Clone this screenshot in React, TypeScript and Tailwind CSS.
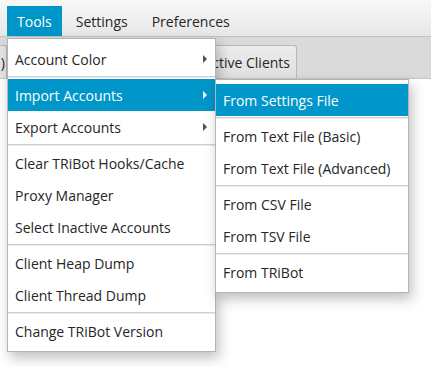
import React from "react";

const font = { fontFamily: '"Open Sans", "Noto Sans", sans-serif' };

function Arrow({ white }: { white?: boolean }) {
  return (
    <svg width="4" height="8" viewBox="0 0 4 8" className="shrink-0">
      <path d="M0 0 L4 4 L0 8 Z" fill={white ? "#ffffff" : "#4f4f4f"} />
    </svg>
  );
}

function Sep() {
  return (
    <div className="h-[4px] pt-[1px]">
      <div className="h-px bg-[#d0d0d0]" />
      <div className="h-px bg-[#ececec]" />
    </div>
  );
}

function Item({
  label,
  active,
  sub,
  pl,
}: {
  label: string;
  active?: boolean;
  sub?: boolean;
  pl: string;
}) {
  return (
    <div
      className={`h-[32px] flex items-center justify-between pr-[8px] ${pl} ${
        active ? "bg-[#0096c9] text-white" : "text-[#262626]"
      }`}
    >
      <span className="whitespace-nowrap">{label}</span>
      {sub && <Arrow white={active} />}
    </div>
  );
}

export default function App() {
  return (
    <div
      className="relative w-[431px] h-[367px] bg-white overflow-hidden text-[14px]"
      style={font}
    >
      {/* Menu bar */}
      <div className="h-[37px] flex items-stretch pt-[6px] pl-[7px] gap-[4px] bg-gradient-to-b from-[#f8f8f8] to-[#e7e7e7] border-b border-[#c2c2c2]">
        <div className="px-[10px] flex items-center bg-[#0096c9] text-white">Tools</div>
        <div className="px-[10px] flex items-center text-[#262626]">Settings</div>
        <div className="px-[10px] flex items-center text-[#262626]">Preferences</div>
      </div>

      {/* Tab header */}
      <div className="h-[42px] bg-[#dadada] border-b border-[#c6c6c6] flex items-end gap-[3px] pt-[8px]">
        <div className="h-[33px] w-[7px] bg-[#e6e6e6] border-t border-r border-[#b9b9b9] rounded-tr-[3px] flex items-center justify-end overflow-hidden text-[#262626]">
          <span className="whitespace-nowrap pr-[1px]">)</span>
        </div>
        <div className="h-[33px] w-[287px] bg-gradient-to-b from-[#ececec] to-[#e0e0e0] border border-b-0 border-[#b9b9b9] rounded-t-[3px] flex items-center justify-end pr-[6px] text-[#262626]">
          <span className="whitespace-nowrap">Inactive Clients</span>
        </div>
      </div>

      {/* Main dropdown */}
      <div className="absolute left-[7px] top-[38px] w-[209px] bg-white border border-[#b4b4b4] py-[4px] shadow-[3px_6px_12px_rgba(0,0,0,0.25)]">
        <Item pl="pl-[7px]" label="Account Color" sub />
        <Sep />
        <Item pl="pl-[7px]" label="Import Accounts" sub active />
        <Item pl="pl-[7px]" label="Export Accounts" sub />
        <Sep />
        <Item pl="pl-[7px]" label="Clear TRiBot Hooks/Cache" />
        <Item pl="pl-[7px]" label="Proxy Manager" />
        <Item pl="pl-[7px]" label="Select Inactive Accounts" />
        <Sep />
        <Item pl="pl-[7px]" label="Client Heap Dump" />
        <Item pl="pl-[7px]" label="Client Thread Dump" />
        <Sep />
        <Item pl="pl-[7px]" label="Change TRiBot Version" />
      </div>

      {/* Submenu */}
      <div className="absolute left-[215px] top-[79px] w-[194px] bg-white border border-[#b4b4b4] py-[4px] shadow-[3px_6px_12px_rgba(0,0,0,0.25)]">
        <Item pl="pl-[7px]" label="From Settings File" active />
        <Sep />
        <Item pl="pl-[7px]" label="From Text File (Basic)" />
        <Item pl="pl-[7px]" label="From Text File (Advanced)" />
        <Sep />
        <Item pl="pl-[7px]" label="From CSV File" />
        <Item pl="pl-[7px]" label="From TSV File" />
        <Sep />
        <Item pl="pl-[7px]" label="From TRiBot" />
      </div>
    </div>
  );
}
